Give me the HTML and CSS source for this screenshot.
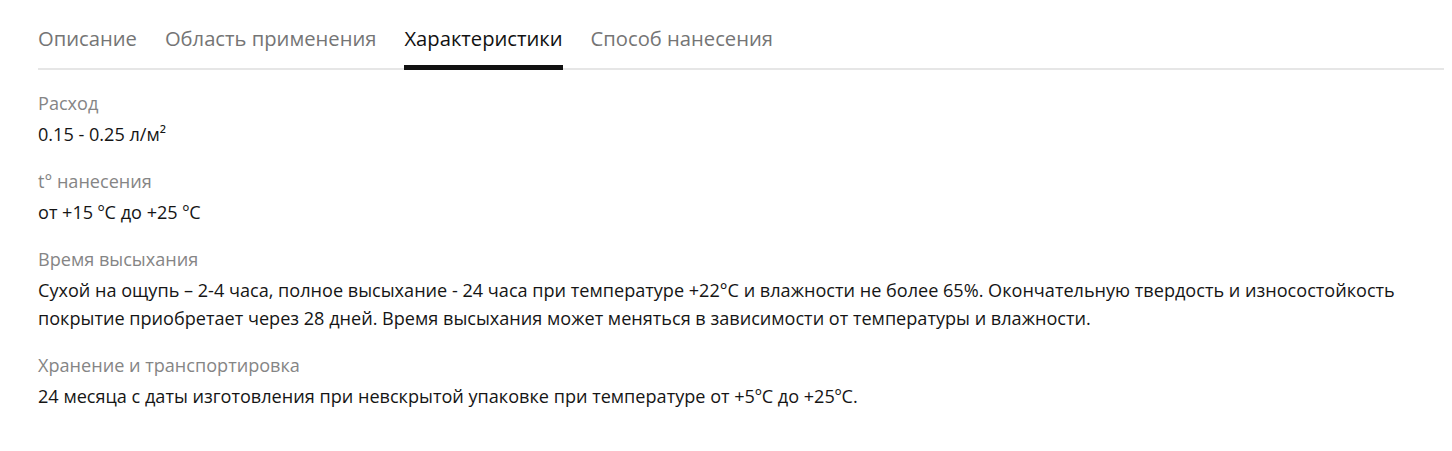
FILE: index.html
```html
<!DOCTYPE html>
<html lang="ru">
<head>
    <meta charset="UTF-8">
    <title>Характеристики</title>
    <link rel="stylesheet" href="styles.css">
</head>
<body>
    <div class="product-tabs">
        <div class="tabs-nav">
            <div class="tab">Описание</div>
            <div class="tab">Область применения</div>
            <div class="tab active">Характеристики</div>
            <div class="tab">Способ нанесения</div>
        </div>
        <div class="tab-content">
            <div class="prop">
                <div class="prop-name">Расход</div>
                <div class="prop-value">0.15 - 0.25 л/м²</div>
            </div>
            <div class="prop">
                <div class="prop-name">t° нанесения</div>
                <div class="prop-value">от +15 ºС до +25 ºС</div>
            </div>
            <div class="prop">
                <div class="prop-name">Время высыхания</div>
                <div class="prop-value">Сухой на ощупь – 2-4 часа, полное высыхание - 24 часа при температуре +22°C и влажности не более 65%. Окончательную твердость и износостойкость покрытие приобретает через 28 дней. Время высыхания может меняться в зависимости от температуры и влажности.</div>
            </div>
            <div class="prop">
                <div class="prop-name">Хранение и транспортировка</div>
                <div class="prop-value">24 месяца с даты изготовления при невскрытой упаковке при температуре от +5ºС до +25ºС.</div>
            </div>
        </div>
    </div>
</body>
</html>
```

FILE: styles.css
```css
body {
    margin: 0;
    background-color: #fff;
    font-family: "Open Sans", Arial, sans-serif;
}
.product-tabs {
    padding: 0 8px 0 38px;
}
.tabs-nav {
    display: flex;
    gap: 28px;
    border-bottom: 2px solid #e6e6e6;
}
.tab {
    font-size: 20.2px;
    line-height: 28px;
    color: #757575;
    padding: 24px 0 13px;
    border-bottom: 5px solid transparent;
    margin-bottom: -2px;
}
.tab.active {
    color: #111;
    border-bottom-color: #111;
}
.tab-content {
    padding-top: 19px;
}
.prop {
    margin-bottom: 19px;
}
.prop-name {
    font-size: 18.1px;
    line-height: 28px;
    color: #858585;
    margin-bottom: 3px;
}
.prop-value {
    font-size: 18.1px;
    line-height: 28px;
    color: #151515;
}
```
